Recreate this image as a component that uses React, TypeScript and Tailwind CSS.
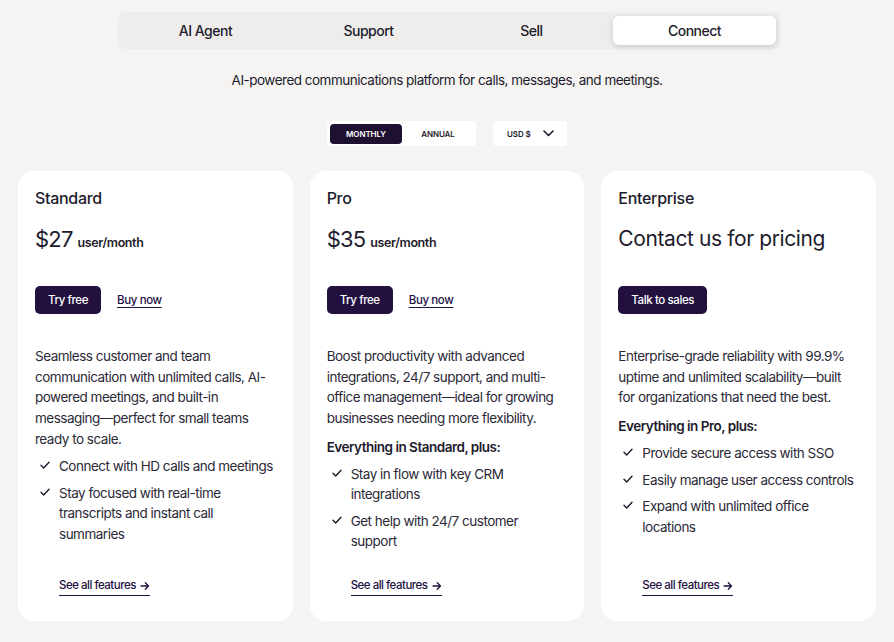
import { useState } from "react";

type Plan = {
	name: string;
	price?: string;
	contact?: string;
	blurb: string;
	plusTitle?: string;
	features: string[];
	primary: string;
	secondary?: string;
};

const plans: Plan[] = [
	{
		name: "Standard",
		price: "$27",
		blurb:
			"Seamless customer and team communication with unlimited calls, AI-powered meetings, and built-in messaging\u2014perfect for small teams ready to scale.",
		features: [
			"Connect with HD calls and meetings",
			"Stay focused with real-time transcripts and instant call summaries",
		],
		primary: "Try free",
		secondary: "Buy now",
	},
	{
		name: "Pro",
		price: "$35",
		blurb:
			"Boost productivity with advanced integrations, 24/7 support, and multi-office management\u2014ideal for growing businesses needing more flexibility.",
		plusTitle: "Everything in Standard, plus:",
		features: [
			"Stay in flow with key CRM integrations",
			"Get help with 24/7 customer support",
		],
		primary: "Try free",
		secondary: "Buy now",
	},
	{
		name: "Enterprise",
		contact: "Contact us for pricing",
		blurb:
			"Enterprise-grade reliability with 99.9% uptime and unlimited scalability\u2014built for organizations that need the best.",
		plusTitle: "Everything in Pro, plus:",
		features: [
			"Provide secure access with SSO",
			"Easily manage user access controls",
			"Expand with unlimited office locations",
		],
		primary: "Talk to sales",
	},
];

const tabs = ["AI Agent", "Support", "Sell", "Connect"];

const Check = () => (
	<svg width="10" height="10" viewBox="0 0 10 10" fill="none" className="mt-[4px] shrink-0">
		<path d="M1 5.3 3.7 8 9 2.3" stroke="#1d1b2c" strokeWidth="1.4" strokeLinecap="round" strokeLinejoin="round" />
	</svg>
);

const PlanCard = ({ plan }: { plan: Plan }) => (
	<div className="flex flex-col rounded-[16px] bg-white pl-[17px] pr-[12px] pt-[18px] pb-[25px]">
		<h3 className="text-[16px] leading-[18px] font-medium tracking-[-0.3px] text-[#1d1b2c]">{plan.name}</h3>

		{plan.price ? (
			<div className="mt-[17px] flex h-[30px] items-baseline gap-[5px]">
				<span className="text-[22px] leading-[30px] tracking-[-0.8px] text-[#1d1b2c]">{plan.price}</span>
				<span className="text-[12.5px] font-semibold tracking-[-0.4px] text-[#1d1b2c]">user/month</span>
			</div>
		) : (
			<div className="mt-[17px] h-[30px] text-[21px] leading-[30px] tracking-[-0.4px] text-[#1d1b2c]">
				{plan.contact}
			</div>
		)}

		<div className="mt-[32px] flex items-center gap-[16px]">
			<button className="h-[28px] rounded-[5px] bg-[#22103f] px-[13px] text-[11.5px] font-medium tracking-[-0.4px] text-white">
				{plan.primary}
			</button>
			{plan.secondary && (
				<a href="#" className="text-[11.5px] font-medium tracking-[-0.4px] text-[#22103f] underline underline-offset-[3px]">
					{plan.secondary}
				</a>
			)}
		</div>

		<p className="mt-[32px] pr-[5px] text-[13.5px] leading-[20.6px] tracking-[-0.5px] text-[#2b2937]">{plan.blurb}</p>

		{plan.plusTitle && (
			<p className="mt-[8px] text-[13.5px] leading-[20px] font-semibold tracking-[-0.5px] text-[#1d1b2c]">
				{plan.plusTitle}
			</p>
		)}

		<ul className="mt-[7px] flex flex-col gap-[6px]">
			{plan.features.map((f) => (
				<li key={f} className="flex gap-[9px] pl-[5px] text-[13.5px] leading-[20.6px] tracking-[-0.5px] text-[#2b2937]">
					<Check />
					<span className="max-w-[215px]">{f}</span>
				</li>
			))}
		</ul>

		<a
			href="#"
			className="mt-auto ml-[24px] flex w-fit items-center gap-[4px] border-b border-[#22103f] pb-[1px] text-[11.5px] font-medium tracking-[-0.5px] text-[#22103f]"
		>
			See all features
			<svg width="10" height="10" viewBox="0 0 10 10" fill="none">
				<path d="M1 5h7.5M5.3 1.8 8.5 5 5.3 8.2" stroke="#22103f" strokeWidth="1.3" strokeLinecap="round" strokeLinejoin="round" />
			</svg>
		</a>
	</div>
);

export default function App() {
	const [tab, setTab] = useState("Connect");
	const [billing, setBilling] = useState("Monthly");

	return (
		<div className="min-h-[642px] w-[894px] bg-[#f5f4f2] pt-[12px] font-['Inter',sans-serif]">
			<div className="mx-auto grid w-[662px] translate-x-[2px] grid-cols-4 rounded-[6px] bg-[#eeedeb] p-[4px] pl-[6px]">
				{tabs.map((t) => (
					<button
						key={t}
						onClick={() => setTab(t)}
						className={`h-[29px] rounded-[6px] text-[14px] font-medium tracking-[-0.5px] text-[#1d1b2c] ${
							tab === t ? "bg-white shadow-[0_2px_6px_rgba(0,0,0,0.14)]" : ""
						}`}
					>
						{t}
					</button>
				))}
			</div>

			<p className="mt-[21px] text-center text-[13.5px] tracking-[-0.5px] text-[#1d1b2c]">
				AI-powered communications platform for calls, messages, and meetings.
			</p>

			<div className="mt-[31px] flex justify-center gap-[17px]">
				<div className="flex h-[25px] items-center rounded-[4px] bg-white p-[2px] pl-[3px]">
					{["Monthly", "Annual"].map((b) => (
						<button
							key={b}
							onClick={() => setBilling(b)}
							className={`h-[20px] w-[72px] rounded-[4px] text-[8px] font-semibold uppercase tracking-[-0.1px] ${
								billing === b ? "bg-[#1e1030] text-white" : "text-[#1d1b2c]"
							}`}
						>
							{b}
						</button>
					))}
				</div>
				<div className="flex h-[25px] w-[74px] items-center justify-between rounded-[4px] bg-white pl-[14px] pr-[13px]">
					<span className="text-[8px] font-semibold tracking-[-0.1px] text-[#1d1b2c]">USD $</span>
					<svg width="11" height="7" viewBox="0 0 11 7" fill="none">
						<path d="M1 1l4.5 4.5L10 1" stroke="#1d1b2c" strokeWidth="1.6" strokeLinecap="round" strokeLinejoin="round" />
					</svg>
				</div>
			</div>

			<div className="mt-[25px] grid h-[450px] grid-cols-3 gap-[17px] px-[18px]">
				{plans.map((p) => (
					<PlanCard key={p.name} plan={p} />
				))}
			</div>
		</div>
	);
}
